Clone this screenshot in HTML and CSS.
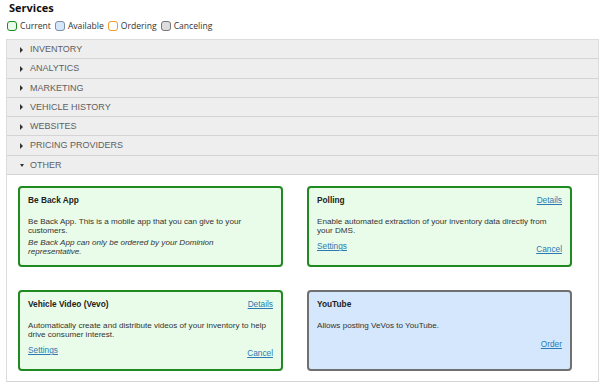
FILE: index.html
```html
<!DOCTYPE html>
<html lang="en">
<head>
    <meta charset="utf-8">
    <title>Services</title>
    <link rel="stylesheet" href="styles.css">
</head>
<body>
    <div class="page">
        <h1 class="title">Services</h1>
        <ul class="legend">
            <li><span class="swatch current"></span>Current</li>
            <li><span class="swatch available"></span>Available</li>
            <li><span class="swatch ordering"></span>Ordering</li>
            <li><span class="swatch canceling"></span>Canceling</li>
        </ul>

        <div class="accordion">
            <div class="acc-header">INVENTORY</div>
            <div class="acc-header">ANALYTICS</div>
            <div class="acc-header">MARKETING</div>
            <div class="acc-header">VEHICLE HISTORY</div>
            <div class="acc-header">WEBSITES</div>
            <div class="acc-header">PRICING PROVIDERS</div>
            <div class="acc-header open">OTHER</div>
            <div class="acc-panel">
                <div class="card current">
                    <div class="card-head">
                        <span class="card-title">Be Back App</span>
                    </div>
                    <p class="card-desc">Be Back App. This is a mobile app that you can give to your customers.</p>
                    <p class="card-note">Be Back App can only be ordered by your Dominion representative.</p>
                </div>

                <div class="card current">
                    <div class="card-head">
                        <span class="card-title">Polling</span>
                        <a href="#" class="link">Details</a>
                    </div>
                    <p class="card-desc">Enable automated extraction of your inventory data directly from your DMS.</p>
                    <div class="card-foot">
                        <a href="#" class="link">Settings</a>
                        <a href="#" class="link action">Cancel</a>
                    </div>
                </div>

                <div class="card current">
                    <div class="card-head">
                        <span class="card-title">Vehicle Video (Vevo)</span>
                        <a href="#" class="link">Details</a>
                    </div>
                    <p class="card-desc">Automatically create and distribute videos of your inventory to help drive consumer interest.</p>
                    <div class="card-foot">
                        <a href="#" class="link">Settings</a>
                        <a href="#" class="link action">Cancel</a>
                    </div>
                </div>

                <div class="card available">
                    <div class="card-head">
                        <span class="card-title">YouTube</span>
                    </div>
                    <p class="card-desc">Allows posting VeVos to YouTube.</p>
                    <div class="card-foot">
                        <span></span>
                        <a href="#" class="link action">Order</a>
                    </div>
                </div>
            </div>
        </div>
    </div>
</body>
</html>
```

FILE: styles.css
```css
* {
    margin: 0;
    padding: 0;
    box-sizing: border-box;
}

body {
    background: #fff;
    color: #333;
    font-family: 'Liberation Sans', Arial, sans-serif;
}

.page {
    padding: 1px 6px 0 6px;
    width: 605px;
}

.title {
    font-family: 'Open Sans', sans-serif;
    font-size: 11px;
    line-height: 14px;
    font-weight: 700;
    color: #111;
    padding-left: 3px;
}

.legend {
    list-style: none;
    display: flex;
    gap: 4px;
    margin-top: 5px;
    padding-left: 1px;
    font-family: 'Open Sans', sans-serif;
    font-size: 8.6px;
    line-height: 12px;
    color: #333;
}

.legend li {
    display: flex;
    align-items: center;
}

.swatch {
    width: 10px;
    height: 10px;
    border-radius: 3px;
    border: 1.5px solid #888;
    margin-right: 3px;
}

.swatch.current { border-color: #1c8a1c; background: #e9fce9; }
.swatch.available { border-color: #7d8ea0; background: #d4e7fc; }
.swatch.ordering { border-color: #f39a2a; background: #fff; }
.swatch.canceling { border-color: #777; background: #ddd; }

.accordion {
    margin-top: 7px;
    border: 1px solid #dcdcdc;
    border-bottom: none;
}

.acc-header {
    height: 19.3px;
    line-height: 18.3px;
    background: #eeeeee;
    border-bottom: 1px solid #d4d4d4;
    color: #5f5f5f;
    font-size: 9px;
    padding-left: 23px;
    position: relative;
}

.acc-header::before {
    content: '';
    position: absolute;
    left: 13px;
    top: 6.5px;
    border-left: 3px solid #333;
    border-top: 3px solid transparent;
    border-bottom: 3px solid transparent;
}

.acc-header.open::before {
    left: 12.5px;
    top: 8px;
    border-top: 3px solid #333;
    border-left: 2.5px solid transparent;
    border-right: 2.5px solid transparent;
    border-bottom: none;
}

.acc-panel {
    display: grid;
    grid-template-columns: 265px 265px;
    column-gap: 24px;
    row-gap: 23px;
    padding: 11px 11px 10px;
    border-bottom: 1px solid #d4d4d4;
}

.card {
    height: 81px;
    border: 2px solid #1f8a1f;
    border-radius: 4px;
    background: #e9fce9;
    padding: 7px 8px;
    font-size: 8.1px;
    line-height: 9px;
    color: #333;
}

.card.available {
    border-color: #707070;
    background: #d4e7fc;
}

.card-head {
    display: flex;
    justify-content: space-between;
    line-height: 10px;
}

.card-title {
    font-weight: 700;
    color: #222;
    font-size: 8.3px;
}

.card-desc {
    margin-top: 12px;
}

.card-note {
    margin-top: 3px;
    max-width: 225px;
    font-style: italic;
}

.card-foot {
    display: flex;
    justify-content: space-between;
    align-items: flex-start;
    margin-top: 6px;
    line-height: 10px;
}

.link {
    color: #2b7ab3;
    text-decoration: underline;
    font-size: 8.3px;
}

.link.action {
    margin-top: 3px;
}
```
